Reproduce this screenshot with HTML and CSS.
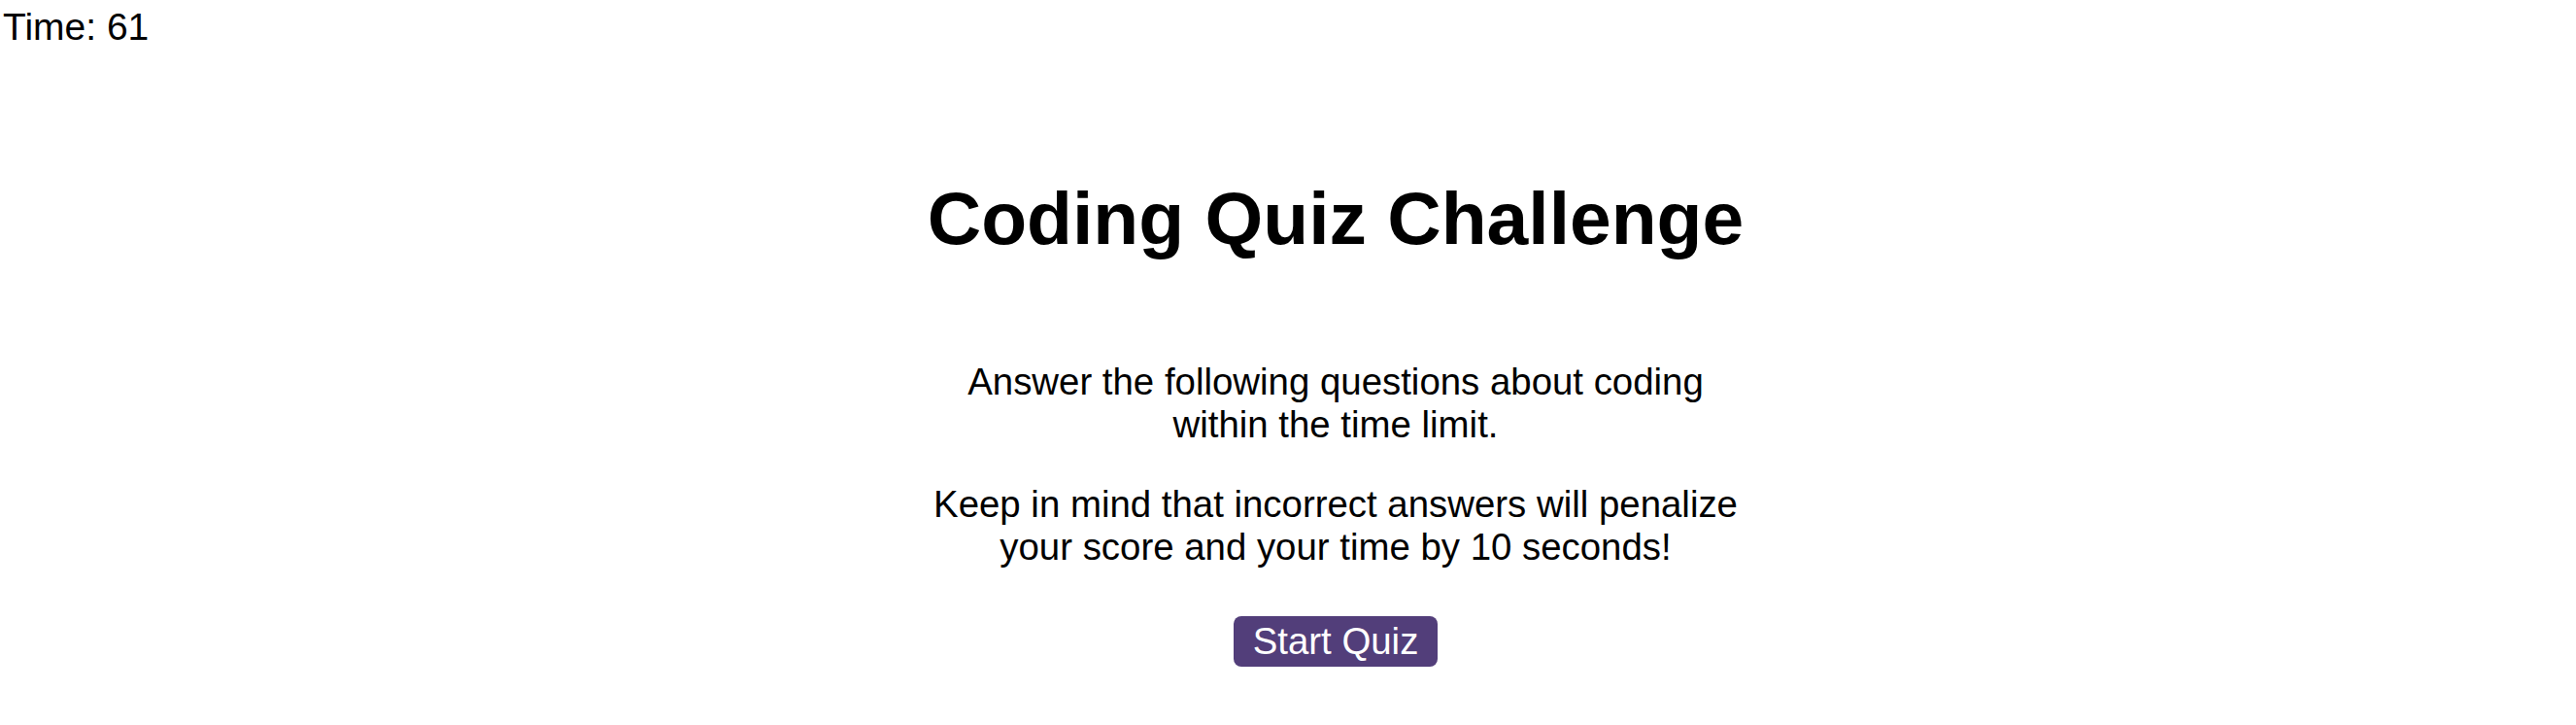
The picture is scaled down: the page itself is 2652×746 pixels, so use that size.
FILE: index.html
```html
<!DOCTYPE html>
<html lang="en">
<head>
<meta charset="utf-8">
<title>Coding Quiz Challenge</title>
<link rel="stylesheet" href="styles.css">
</head>
<body>
<header class="topbar">
  <div class="timer">Time: <span class="timer-value">61</span></div>
</header>
<main class="main">
  <h1 class="title">Coding Quiz Challenge</h1>
  <div class="intro">
    <p class="intro-text">Answer the following questions about coding within the time limit.</p>
    <p class="intro-text">Keep in mind that incorrect answers will penalize your score and your time by 10 seconds!</p>
  </div>
  <button class="start-btn" type="button">Start Quiz</button>
</main>
</body>
</html>
```
FILE: styles.css
```css
html, body {
  margin: 0;
  padding: 0;
  background: #ffffff;
}

body {
  font-family: "Liberation Sans", Arial, Helvetica, sans-serif;
  color: #000000;
  font-size: 38.4px;
}

.topbar {
  padding: 6px 0 0 3px;
}

.timer {
  font-size: 39px;
  line-height: normal;
}

.main {
  display: flex;
  flex-direction: column;
  align-items: center;
  padding-left: 98px;
}

.title {
  font-size: 76.8px;
  font-weight: bold;
  margin: 130px 0 102px;
  line-height: normal;
}

.intro {
  display: flex;
  flex-direction: column;
  gap: 38.4px;
  max-width: 845px;
  text-align: center;
}

.intro-text {
  margin: 0;
  line-height: normal;
}

.start-btn {
  margin-top: 49px;
  font-family: "Liberation Sans", Arial, Helvetica, sans-serif;
  font-size: 38.4px;
  line-height: normal;
  color: #ffffff;
  background: #523e7a;
  border: none;
  border-radius: 8px;
  padding: 4px 19.5px;
  cursor: pointer;
}
```
